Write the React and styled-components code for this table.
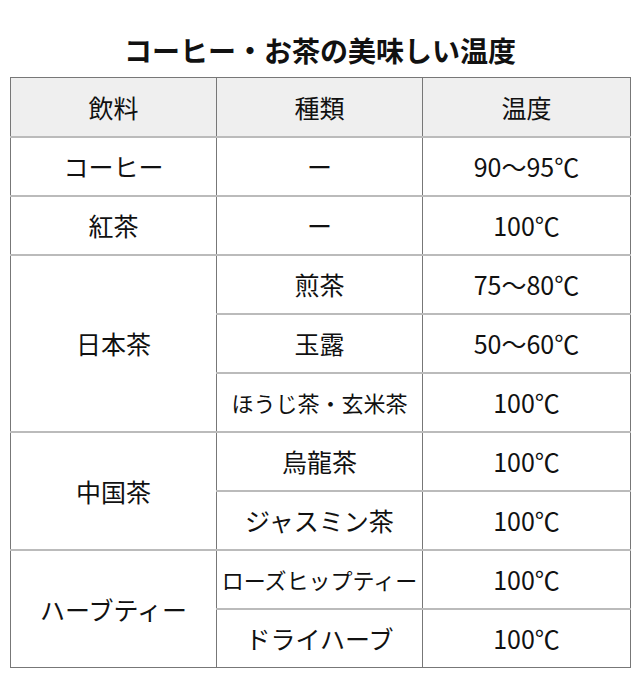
import React from "react";
import styled, { createGlobalStyle } from "styled-components";

const GlobalStyle = createGlobalStyle`
  html, body {
    margin: 0;
    padding: 0;
    background: #fff;
  }
  body {
    font-family: "Noto Sans CJK JP", "Noto Sans", sans-serif;
    color: #111;
  }
`;

const Page = styled.div`
  padding: 32px 10px 0;
`;

const Title = styled.h1`
  margin: 0 0 9px;
  font-size: 28px;
  line-height: 36px;
  font-weight: 700;
  text-align: center;
  color: #111;
`;

const Table = styled.table`
  width: 620px;
  border-collapse: collapse;
  border: 1px solid #777;
  table-layout: fixed;
`;

const Row = styled.tr`
  height: 59px;
`;

const Th = styled.th`
  background: #efefef;
  font-weight: 400;
  font-size: 25px;
  text-align: center;
  padding: 0;
  border-left: 1px solid #777;
  border-right: 1px solid #777;
`;

const Td = styled.td`
  font-size: ${(p) => (p.$small ? "22px" : "25px")};
  text-align: center;
  vertical-align: middle;
  padding: 0;
  white-space: nowrap;
  border-top: 2px solid #bbb;
  border-left: 1px solid #777;
  border-right: 1px solid #777;
`;

const rows = [
  { group: "コーヒー", span: 1, items: [["ー", "90〜95℃"]] },
  { group: "紅茶", span: 1, items: [["ー", "100℃"]] },
  {
    group: "日本茶",
    span: 3,
    items: [
      ["煎茶", "75〜80℃"],
      ["玉露", "50〜60℃"],
      ["ほうじ茶・玄米茶", "100℃", true],
    ],
  },
  {
    group: "中国茶",
    span: 2,
    items: [
      ["烏龍茶", "100℃"],
      ["ジャスミン茶", "100℃"],
    ],
  },
  {
    group: "ハーブティー",
    span: 2,
    items: [
      ["ローズヒップティー", "100℃", true],
      ["ドライハーブ", "100℃"],
    ],
  },
];

export default function App() {
  return (
    <Page>
      <GlobalStyle />
      <Title>コーヒー・お茶の美味しい温度</Title>
      <Table>
        <colgroup>
          <col style={{ width: 206 }} />
          <col style={{ width: 206 }} />
          <col style={{ width: 208 }} />
        </colgroup>
        <thead>
          <Row>
            <Th>飲料</Th>
            <Th>種類</Th>
            <Th>温度</Th>
          </Row>
        </thead>
        <tbody>
          {rows.map((r) =>
            r.items.map(([kind, temp, small], i) => (
              <Row key={r.group + kind}>
                {i === 0 && <Td rowSpan={r.span}>{r.group}</Td>}
                <Td $small={small}>{kind}</Td>
                <Td>{temp}</Td>
              </Row>
            ))
          )}
        </tbody>
      </Table>
    </Page>
  );
}
